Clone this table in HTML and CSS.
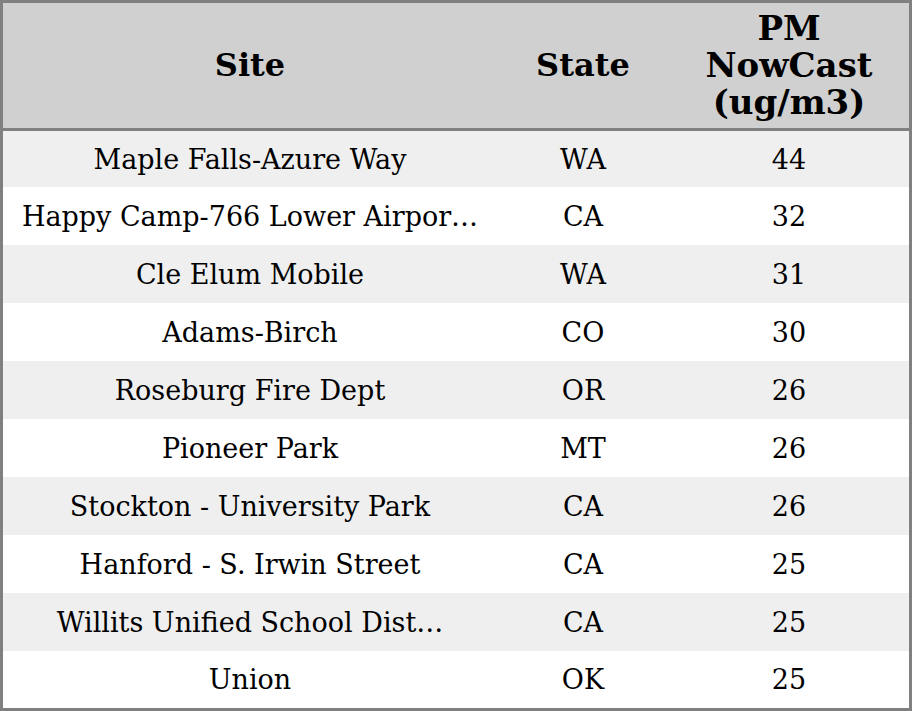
FILE: index.html
```html
<!DOCTYPE html>
<html>
<head>
<meta charset="utf-8">
<link rel="stylesheet" href="styles.css">
</head>
<body>
<table class="grid">
  <colgroup>
    <col class="c-site">
    <col class="c-state">
    <col class="c-pm">
  </colgroup>
  <thead>
    <tr class="head">
      <th>Site</th>
      <th>State</th>
      <th class="pm">PM<br>NowCast<br>(ug/m3)</th>
    </tr>
  </thead>
  <tbody>
    <tr class="first"><td>Maple Falls-Azure Way</td><td>WA</td><td>44</td></tr>
    <tr><td>Happy Camp-766 Lower Airpor…</td><td>CA</td><td>32</td></tr>
    <tr><td>Cle Elum Mobile</td><td>WA</td><td>31</td></tr>
    <tr><td>Adams-Birch</td><td>CO</td><td>30</td></tr>
    <tr><td>Roseburg Fire Dept</td><td>OR</td><td>26</td></tr>
    <tr><td>Pioneer Park</td><td>MT</td><td>26</td></tr>
    <tr><td>Stockton - University Park</td><td>CA</td><td>26</td></tr>
    <tr><td>Hanford - S. Irwin Street</td><td>CA</td><td>25</td></tr>
    <tr><td>Willits Unified School Dist…</td><td>CA</td><td>25</td></tr>
    <tr class="last"><td>Union</td><td>OK</td><td>25</td></tr>
  </tbody>
</table>
</body>
</html>
```
FILE: styles.css
```css
html, body {
  margin: 0;
  padding: 0;
  background: #ffffff;
}
.grid {
  width: 912px;
  border-collapse: separate;
  border-spacing: 0;
  table-layout: fixed;
  border: 3px solid #808080;
  font-family: "DejaVu Serif", serif;
  color: #000;
}
.c-site { width: 494px; }
.c-state { width: 172px; }
.c-pm { width: 240px; }
.head th {
  background: #d0d0d0;
  height: 128px;
  padding: 0 8px;
  box-sizing: border-box;
  font-size: 32px;
  font-weight: bold;
  line-height: 37px;
  text-align: center;
  vertical-align: middle;
  border-bottom: 3px solid #808080;
}
.head th.pm {
  font-size: 34px;
  line-height: 37px;
}
.grid td {
  height: 58px;
  padding: 0 8px;
  box-sizing: border-box;
  font-size: 27px;
  text-align: center;
  vertical-align: middle;
  white-space: nowrap;
  overflow: hidden;
}
.grid tbody tr:nth-child(odd) td { background: #efefef; }
.grid tbody tr:nth-child(even) td { background: #ffffff; }
.grid tbody tr.first td { height: 56px; }
.grid tbody tr.last td { height: 57px; }
```
